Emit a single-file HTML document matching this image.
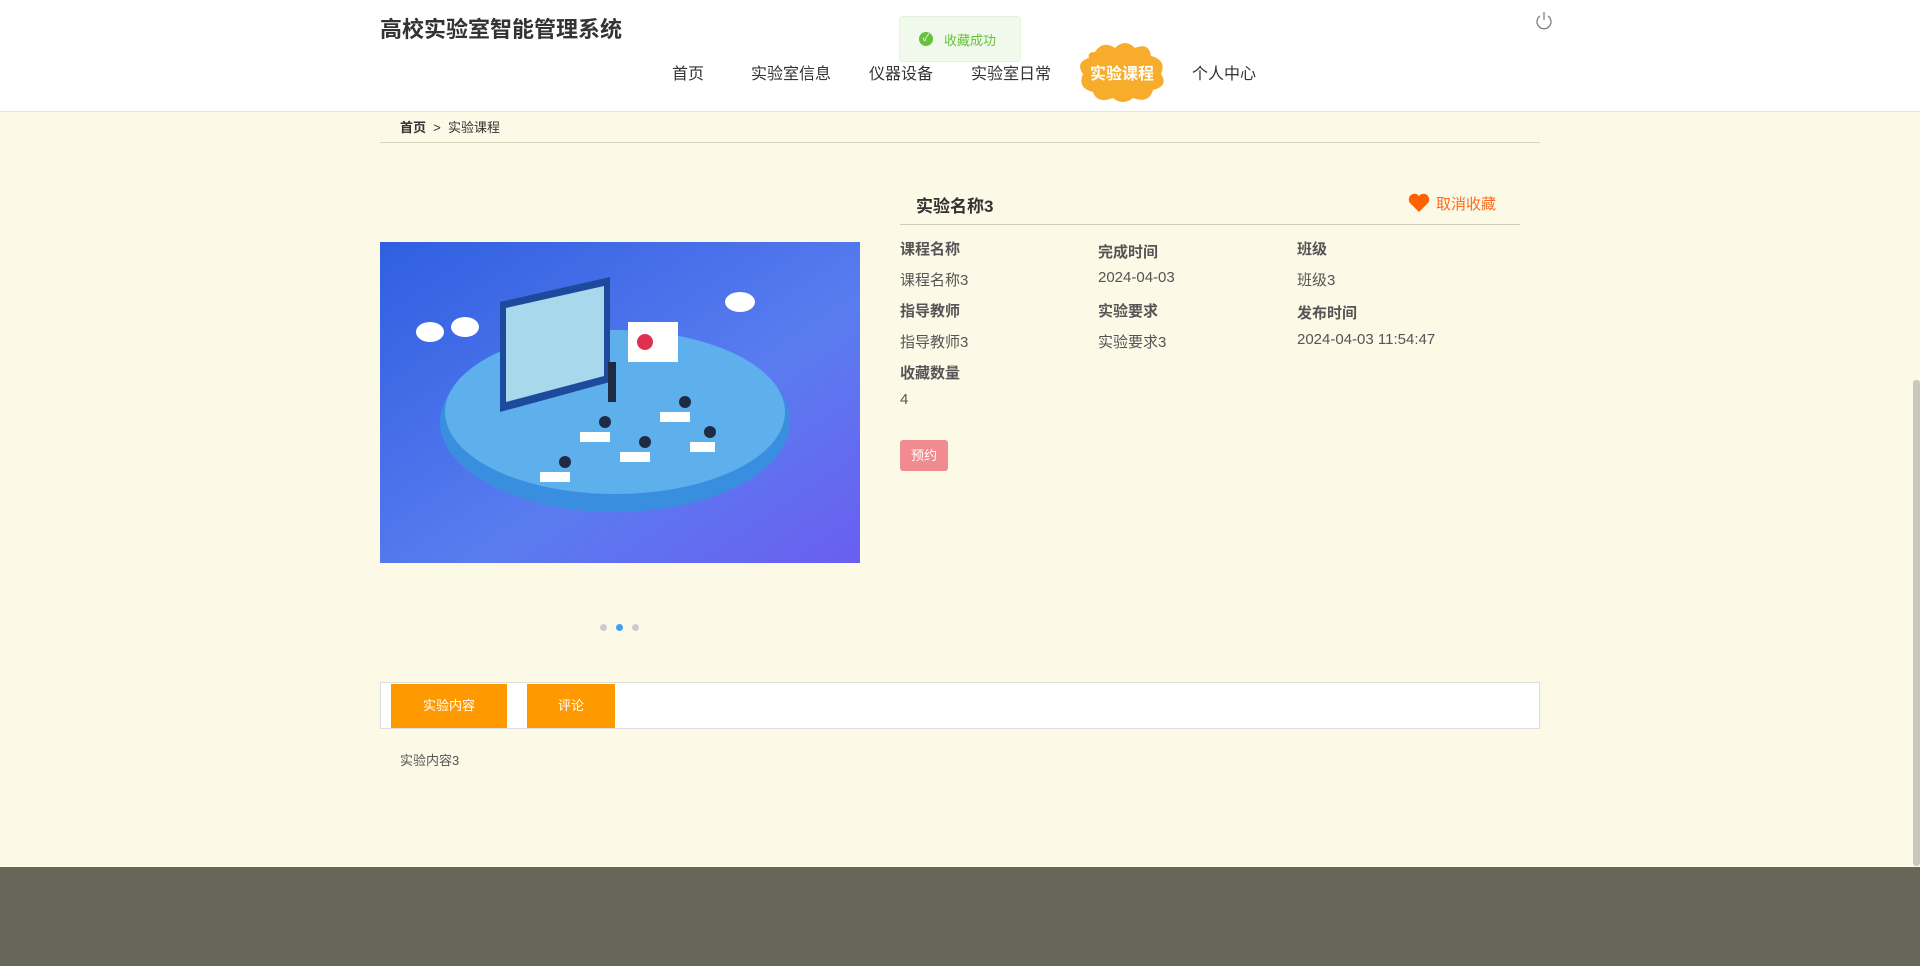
<!DOCTYPE html>
<html><head><meta charset="utf-8"><style>
*{margin:0;padding:0;box-sizing:border-box}
body{width:1920px;height:966px;position:relative;overflow:hidden;background:#fcf9e7;font-family:"Liberation Sans","Noto Sans CJK SC",sans-serif;color:#333}
.a{position:absolute;white-space:nowrap}
.hdr{position:absolute;left:0;top:0;width:1920px;height:112px;background:#fff;border-bottom:1px solid #e8e6c0}
.nav{font-size:16px;color:#333;top:60px}
.lab{font-size:15px;font-weight:bold;color:#555}
.val{font-size:15px;color:#555}
</style></head><body>
<div class="hdr"></div>
<div class="a" style="left:380px;top:12px;font-size:22px;font-weight:bold;color:#333">高校实验室智能管理系统</div>
<div class="a" style="left:899px;top:16px;width:122px;height:46px;background:#f0f9eb;border:1px solid #e1f3d8;border-radius:4px"></div>
<div class="a" style="left:919px;top:32px;width:14px;height:14px;border-radius:50%;background:#67c23a;color:#fff;font-size:10px;line-height:14px;text-align:center">✓</div>
<div class="a" style="left:944px;top:30px;font-size:13px;color:#67c23a">收藏成功</div>
<div class="a nav" style="left:672px">首页</div>
<div class="a nav" style="left:751px">实验室信息</div>
<div class="a nav" style="left:869px">仪器设备</div>
<div class="a nav" style="left:971px">实验室日常</div>
<svg class="a" style="left:1075px;top:40px" width="94" height="64" viewBox="0 0 94 64"><path d="M20 12 Q28 0 40 8 Q50 -2 60 8 Q74 2 76 16 Q92 20 86 34 Q94 46 78 50 Q74 64 58 58 Q48 66 38 58 Q22 64 18 52 Q2 48 8 34 Q0 22 14 18 Q12 12 20 12Z" fill="#f7ac2b"/></svg>
<div class="a nav" style="left:1090px;top:60px;color:#fff;font-weight:bold">实验课程</div>
<div class="a nav" style="left:1192px">个人中心</div>
<svg class="a" style="left:1535px;top:11px" width="18" height="20" viewBox="0 0 18 20"><path d="M5 5 A7 7 0 1 0 13 5" fill="none" stroke="#888" stroke-width="1.4"/><path d="M9 1 V9" stroke="#888" stroke-width="1.4"/></svg>
<div class="a" style="left:400px;top:117px;font-size:13px;color:#333"><b>首页</b> &nbsp;&gt;&nbsp; 实验课程</div>
<div class="a" style="left:380px;top:142px;width:1160px;height:1px;background:#d8d4bc"></div>
<svg class="a" style="left:380px;top:242px" width="480" height="321" viewBox="0 0 480 321">
<defs><linearGradient id="g" x1="0" y1="0" x2="1" y2="1"><stop offset="0" stop-color="#2f5fe0"/><stop offset=".6" stop-color="#5a7cf0"/><stop offset="1" stop-color="#6a5ef0"/></linearGradient></defs>
<rect width="480" height="321" fill="url(#g)"/>
<ellipse cx="235" cy="180" rx="175" ry="90" fill="#3a8ee0"/>
<ellipse cx="235" cy="170" rx="170" ry="82" fill="#5db0ec"/>
<polygon points="120,60 230,35 230,140 120,170" fill="#1d4a9c"/>
<polygon points="126,66 224,44 224,134 126,160" fill="#a8d8ec"/>
<rect x="248" y="80" width="50" height="40" fill="#fff"/>
<circle cx="265" cy="100" r="8" fill="#e03050"/>
<g fill="#fff"><rect x="200" y="190" width="30" height="10"/><rect x="240" y="210" width="30" height="10"/><rect x="280" y="170" width="30" height="10"/><rect x="160" y="230" width="30" height="10"/><rect x="310" y="200" width="25" height="10"/></g>
<g fill="#1f2a44"><circle cx="225" cy="180" r="6"/><circle cx="265" cy="200" r="6"/><circle cx="305" cy="160" r="6"/><circle cx="185" cy="220" r="6"/><circle cx="330" cy="190" r="6"/><rect x="228" y="120" width="8" height="40"/></g>
<g fill="#fff"><ellipse cx="50" cy="90" rx="14" ry="10"/><ellipse cx="85" cy="85" rx="14" ry="10"/><ellipse cx="360" cy="60" rx="15" ry="10"/></g>
</svg>
<div class="a" style="left:600px;top:624px;width:7px;height:7px;border-radius:50%;background:#ccc"></div>
<div class="a" style="left:616px;top:624px;width:7px;height:7px;border-radius:50%;background:#409eff"></div>
<div class="a" style="left:632px;top:624px;width:7px;height:7px;border-radius:50%;background:#ccc"></div>
<div class="a" style="left:916px;top:192px;font-size:17px;font-weight:bold;color:#333">实验名称3</div>
<svg class="a" style="left:1408px;top:193px" width="22" height="20" viewBox="0 0 22 20"><path d="M11 19 L2 10 A5 5 0 0 1 11 3 A5 5 0 0 1 20 10Z" fill="#ff6000"/></svg>
<div class="a" style="left:1436px;top:193px;font-size:15px;color:#ff6a1a">取消收藏</div>
<div class="a" style="left:900px;top:224px;width:620px;height:1px;background:#d0ccb8"></div>
<div class="a lab" style="left:900px;top:238px">课程名称</div>
<div class="a lab" style="left:1098px;top:241px">完成时间</div>
<div class="a lab" style="left:1297px;top:238px">班级</div>
<div class="a val" style="left:900px;top:269px">课程名称3</div>
<div class="a val" style="left:1098px;top:269px">2024-04-03</div>
<div class="a val" style="left:1297px;top:269px">班级3</div>
<div class="a lab" style="left:900px;top:300px">指导教师</div>
<div class="a lab" style="left:1098px;top:300px">实验要求</div>
<div class="a lab" style="left:1297px;top:302px">发布时间</div>
<div class="a val" style="left:900px;top:331px">指导教师3</div>
<div class="a val" style="left:1098px;top:331px">实验要求3</div>
<div class="a val" style="left:1297px;top:331px">2024-04-03 11:54:47</div>
<div class="a lab" style="left:900px;top:362px">收藏数量</div>
<div class="a val" style="left:900px;top:391px">4</div>
<div class="a" style="left:900px;top:440px;width:48px;height:31px;background:#f08c8f;border-radius:3px;color:#fff;font-size:13px;text-align:center;line-height:31px">预约</div>
<div class="a" style="left:380px;top:682px;width:1160px;height:47px;background:#fff;border:1px solid #ddd"></div>
<div class="a" style="left:391px;top:684px;width:116px;height:44px;background:#ff9900;color:#fff;font-size:13px;text-align:center;line-height:44px">实验内容</div>
<div class="a" style="left:527px;top:684px;width:88px;height:44px;background:#ff9900;color:#fff;font-size:13px;text-align:center;line-height:44px">评论</div>
<div class="a" style="left:400px;top:750px;font-size:13px;color:#555">实验内容3</div>
<div class="a" style="left:0;top:867px;width:1920px;height:99px;background:#666659"></div>
<div class="a" style="left:1913px;top:380px;width:7px;height:486px;background:#c8c8c0;border-radius:3px"></div>
</body></html>
